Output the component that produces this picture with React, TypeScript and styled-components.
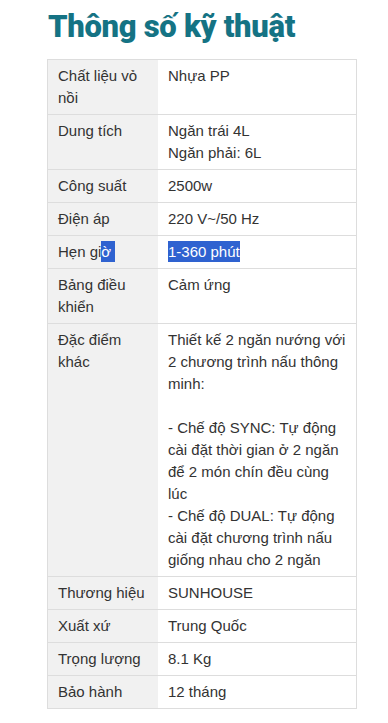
import React from 'react';
import styled, { createGlobalStyle } from 'styled-components';

const GlobalStyle = createGlobalStyle`
  body {
    margin: 0;
    background: #fff;
    font-family: Arial, "Liberation Sans", sans-serif;
    color: #333;
  }
`;

const Page = styled.div`
  padding: 0 31px 20px 47px;
`;

const Title = styled.h2`
  margin: 0 0 9px 1px;
  padding-top: 4px;
  font-family: Roboto, "Liberation Sans", sans-serif;
  font-weight: 900;
  font-size: 31px;
  line-height: 46px;
  letter-spacing: -0.3px;
  color: #157384;
`;

const SpecTable = styled.table`
  width: 310px;
  border-collapse: collapse;
  border: 1px solid #ddd;
  font-size: 15px;
  line-height: 22px;
`;

const Row = styled.tr`
  border-bottom: 1px solid #ddd;
`;

const Cell = styled.td<{ $label?: boolean }>`
  padding: 5px 10px;
  vertical-align: top;
  background: ${({ $label }) => ($label ? '#f1f1f1' : '#fff')};
  width: ${({ $label }) => ($label ? '90px' : 'auto')};
  color: #333;
`;

const Selected = styled.span`
  background: #2f62d0;
  color: #fff;
  padding: 2px 0;
`;

interface Spec {
  label: React.ReactNode;
  value: React.ReactNode;
}

const specs: Spec[] = [
  { label: 'Chất liệu vỏ nồi', value: 'Nhựa PP' },
  {
    label: 'Dung tích',
    value: (
      <>
        Ngăn trái 4L
        <br />
        Ngăn phải: 6L
      </>
    ),
  },
  { label: 'Công suất', value: '2500w' },
  { label: 'Điện áp', value: '220 V~/50 Hz' },
  {
    label: (
      <>
        Hẹn gi<Selected>ờ&nbsp;</Selected>
      </>
    ),
    value: <Selected>1-360 phút</Selected>,
  },
  { label: 'Bảng điều khiển', value: 'Cảm ứng' },
  {
    label: 'Đặc điểm khác',
    value: (
      <>
        Thiết kế 2 ngăn nướng với 2 chương trình nấu thông minh:
        <br />
        <br />
        - Chế độ SYNC: Tự động cài đặt thời gian ở 2 ngăn để 2 món chín đều cùng lúc
        <br />
        - Chế độ DUAL: Tự động cài đặt chương trình nấu giống nhau cho 2 ngăn
      </>
    ),
  },
  { label: 'Thương hiệu', value: 'SUNHOUSE' },
  { label: 'Xuất xứ', value: 'Trung Quốc' },
  { label: 'Trọng lượng', value: '8.1 Kg' },
  { label: 'Bảo hành', value: '12 tháng' },
];

const App: React.FC = () => {
  return (
    <>
      <GlobalStyle />
      <Page>
        <Title>Thông số kỹ thuật</Title>
        <SpecTable>
          <tbody>
            {specs.map((spec, index) => (
              <Row key={index}>
                <Cell $label>{spec.label}</Cell>
                <Cell>{spec.value}</Cell>
              </Row>
            ))}
          </tbody>
        </SpecTable>
      </Page>
    </>
  );
};

export default App;
